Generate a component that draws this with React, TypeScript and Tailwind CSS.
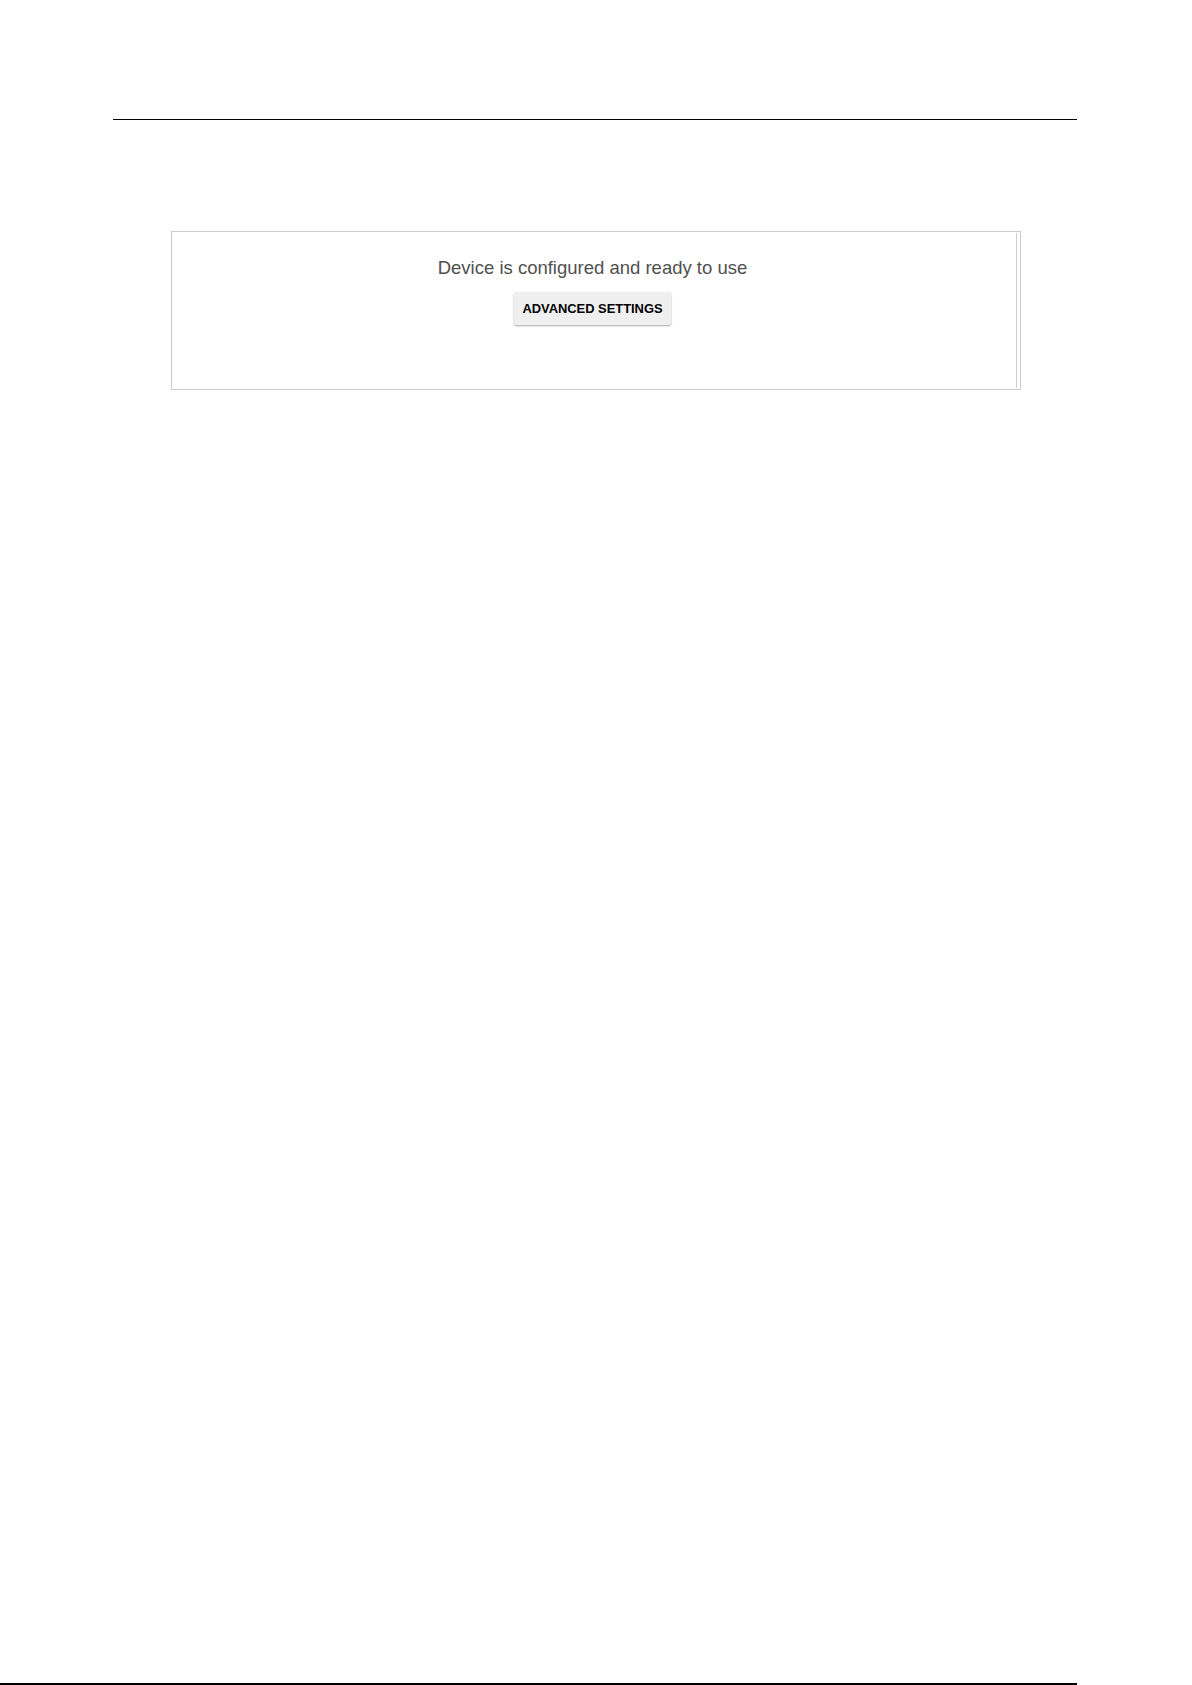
export default function App() {
  return (
    <div className="relative h-[1685px] w-[1192px] overflow-hidden bg-white font-['Liberation_Sans',Arial,sans-serif]">
      <div className="pt-[119px]">
        <div className="ml-[113px] w-[964px] border-t border-black" />
      </div>

      <div className="ml-[171px] mt-[111px] flex h-[159px] w-[850px] border border-[#cccccc]">
        <div className="flex flex-1 flex-col items-center pt-[25px]">
          <p className="text-[18.5px] leading-[22px] text-[#505050]">Device is configured and ready to use</p>
          <button className="mt-[13px] h-[33px] rounded-[2px] bg-[#efefef] px-[8px] text-[12.9px] font-bold text-black shadow-[0_1px_2px_rgba(0,0,0,0.35)]">
            ADVANCED SETTINGS
          </button>
        </div>
        <div className="flex w-[7px] justify-center py-[1px]">
          <div className="w-px bg-[#c9ced6]" />
        </div>
      </div>

      <div className="absolute bottom-0 left-0 h-[2px] w-[1077px] bg-black" />
    </div>
  );
}
